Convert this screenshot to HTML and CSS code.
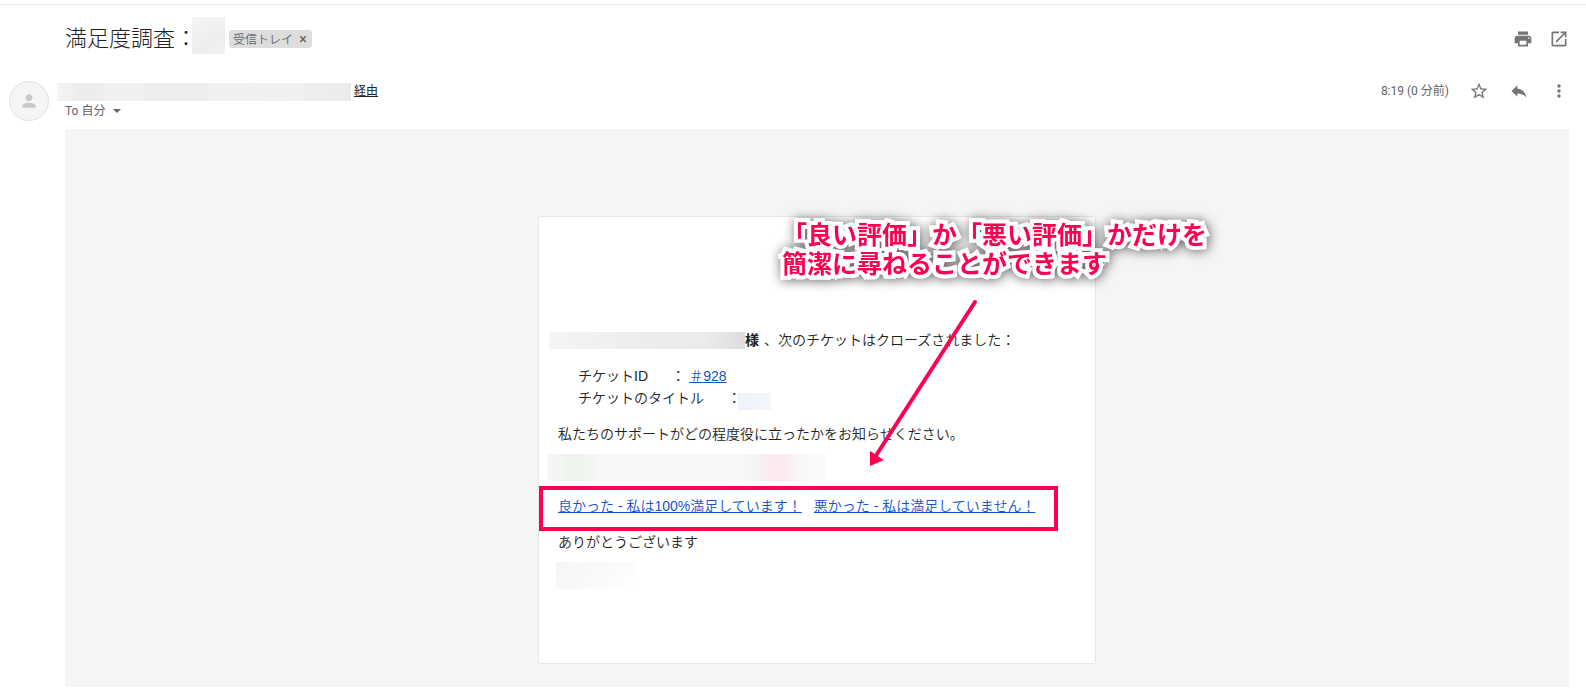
FILE: index.html
```html
<!DOCTYPE html>
<html lang="ja">
<head>
  <meta charset="UTF-8">
  <meta name="viewport" content="width=device-width, initial-scale=1.0">
  <title>満足度調査</title>
  <link rel="stylesheet" href="styles.css">
</head>
<body>

  <!-- Subject -->
  <header class="subject-bar">
    <h1>満足度調査：</h1>
    <span class="redacted redacted-subject"></span>
    <div class="label">受信トレイ <button class="label-remove" aria-label="ラベルを削除">×</button></div>
    <div class="actions actions-top">
      <button class="icon-btn" aria-label="印刷">
        <svg viewBox="0 0 24 24"><path d="M19 8H5c-1.66 0-3 1.34-3 3v6h4v4h12v-4h4v-6c0-1.66-1.34-3-3-3zm-3 11H8v-5h8v5zm3-7c-.55 0-1-.45-1-1s.45-1 1-1 1 .45 1 1-.45 1-1 1zm-1-9H6v4h12V3z"/></svg>
      </button>
      <button class="icon-btn" aria-label="新しいウィンドウ">
        <svg viewBox="0 0 24 24"><path d="M19 19H5V5h7V3H5c-1.11 0-2 .9-2 2v14c0 1.1.89 2 2 2h14c1.1 0 2-.9 2-2v-7h-2v7zM14 3v2h3.59l-9.83 9.83 1.41 1.41L19 6.41V10h2V3h-7z"/></svg>
      </button>
    </div>
  </header>

  <!-- Sender -->
  <section class="sender-bar">
    <div class="avatar">
      <svg viewBox="0 0 24 24"><path d="M12 12c2.21 0 4-1.79 4-4s-1.79-4-4-4-4 1.79-4 4 1.79 4 4 4zm0 2c-2.67 0-8 1.34-8 4v2h16v-2c0-2.66-5.33-4-8-4z"/></svg>
    </div>
    <div class="sender">
      <div class="sender-name">
        <span class="redacted redacted-sender"></span>
        <a href="#">経由</a>
      </div>
      <button class="recipient">To 自分 <span class="caret"></span></button>
    </div>
    <span class="date">8:19 (0 分前)</span>
    <div class="actions">
      <button class="icon-btn" aria-label="スター">
        <svg viewBox="0 0 24 24"><path d="M22 9.24l-7.19-.62L12 2 9.19 8.63 2 9.24l5.46 4.73L5.82 21 12 17.27 18.18 21l-1.63-7.03L22 9.24zM12 15.4l-3.76 2.27 1-4.28-3.32-2.88 4.38-.38L12 6.1l1.71 4.04 4.38.38-3.32 2.88 1 4.28L12 15.4z"/></svg>
      </button>
      <button class="icon-btn" aria-label="返信">
        <svg viewBox="0 0 24 24"><path d="M10 9V5l-7 7 7 7v-4.1c5 0 8.5 1.6 11 5.1-1-5-4-10-11-11z"/></svg>
      </button>
      <button class="icon-btn" aria-label="その他">
        <svg viewBox="0 0 24 24"><path d="M12 8c1.100 0 2-.9 2-2s-.9-2-2-2-2 .9-2 2 .9 2 2 2zm0 2c-1.100 0-2 .9-2 2s.9 2 2 2 2-.9 2-2-.9-2-2-2zm0 6c-1.100 0-2 .9-2 2s.9 2 2 2 2-.9 2-2-.9-2-2-2z"/></svg>
      </button>
    </div>
  </section>

  <!-- Message -->
  <main class="message">
    <article class="card">
      <p class="greeting"><span class="redacted redacted-name"></span><b>様</b> 、次のチケットはクローズされました：</p>

      <div class="ticket">
        <p>チケットID      ： <a href="#">＃928</a></p>
        <p>チケットのタイトル      ：<span class="redacted redacted-title"></span></p>
      </div>

      <p class="text">私たちのサポートがどの程度役に立ったかをお知らせください。</p>
      <div class="redacted redacted-faces"></div>

      <div class="rating">
        <a href="#">良かった - 私は100%満足しています！</a>
        <a href="#">悪かった - 私は満足していません！</a>
      </div>

      <p class="text">ありがとうございます</p>
      <div class="redacted redacted-sign"></div>

      <!-- Callout -->
      <p class="callout">「良い評価」か「悪い評価」かだけを<br>簡潔に尋ねることができます</p>
      <svg class="arrow" viewBox="0 0 120 176">
        <path class="arrow-line" d="M110 8 12 160"/>
        <path class="arrow-head" d="M5 172V157L10 160L14 163L19 166Z"/>
      </svg>
    </article>
  </main>

</body>
</html>
```
FILE: styles.css
```css
/* Global Styles */
* {
  margin: 0;
  padding: 0;
  box-sizing: border-box;
}

body {
  display: flex;
  flex-direction: column;
  min-height: 100vh;
  padding: 4px 0 2px;
  font-family: Roboto, 'Noto Sans CJK JP', sans-serif;
  background: #fff;
  color: #202124;
}

button {
  border: none;
  background: none;
  font: inherit;
  color: inherit;
  cursor: pointer;
}

/* Subject */
.subject-bar {
  display: flex;
  align-items: center;
  height: 68px;
  padding: 0 17px 0 65px;
  border-top: 1px solid #e5e9ed;
}

.subject-bar h1 {
  width: 127px;
  padding-bottom: 6px;
  font-size: 22px;
  font-weight: 300;
  white-space: nowrap;
}

.label {
  display: flex;
  align-items: center;
  gap: 5px;
  height: 18px;
  margin-left: 4px;
  padding: 0 4px;
  border-radius: 3px;
  background: #ddd;
  color: #666;
  font-size: 12px;
  font-weight: 350;
}

.label-remove {
  width: 10px;
  font-size: 14px;
  font-weight: 500;
  line-height: 16px;
}

.actions {
  display: flex;
  gap: 20px;
}

.actions-top {
  gap: 16px;
  margin-left: auto;
}

.icon-btn {
  width: 20px;
  height: 20px;
}

.icon-btn svg {
  display: block;
  fill: #757575;
}

/* Sender */
.sender-bar {
  display: flex;
  align-items: flex-start;
  height: 57px;
  padding: 9px 17px 0 9px;
}

.avatar {
  width: 40px;
  height: 40px;
  padding: 9px;
  border: 1px solid #e2e2e2;
  border-radius: 50%;
  background: #f5f5f5;
}

.avatar svg {
  display: block;
  fill: #c8c8c8;
}

.sender {
  padding-top: 2px;
  margin-left: 8px;
  font-size: 12px;
  line-height: 18px;
}

.sender-name {
  display: flex;
  gap: 3px;
}

.sender-name a {
  color: #222;
  line-height: 16px;
}

.recipient {
  display: flex;
  align-items: center;
  gap: 8px;
  padding: 1px 0 0 8px;
  color: #5f6368;
}

.caret {
  border: 4px solid transparent;
  border-top-color: #666;
  border-bottom: none;
}

.date {
  margin: 0 20px 0 auto;
  color: #5f6368;
  font-size: 12px;
  line-height: 20px;
}

/* Blurred parts */
.redacted {
  display: block;
  flex: none;
}

.redacted-subject {
  width: 33px;
  height: 37px;
  margin-bottom: 6px;
  background: linear-gradient(150deg, #f6f6f6, #eee 60%, #f1f1f1);
}

.redacted-sender {
  width: 294px;
  height: 18px;
  background: linear-gradient(90deg, #f5f5f5, #ebebeb 10%, #f0f0f0 18%, #eee 40%, #f1f1f1 75%, #ebebeb);
}

.redacted-name {
  width: 196px;
  height: 17px;
  background: linear-gradient(90deg, #f5f5f5, #ececec 50%, #ebebeb 80%, #ddd);
}

.redacted-title {
  width: 33px;
  height: 17px;
  margin: 6px 0 0 -3px;
  background: linear-gradient(90deg, #eff2f9, #f4f6fb);
}

.redacted-faces {
  width: 279px;
  height: 27px;
  margin: 9px 0 5px 8px;
  background: linear-gradient(90deg, #f7f7f7, #edf3ed 10%, #f6f7f6 18%, #f8f8f9 70%, #f6f3f4 75%, #fbe8ec 83%, #f8f7f8 91%, #fcfcfc);
}

.redacted-sign {
  width: 79px;
  height: 27px;
  margin: 9px 0 0 17px;
  background: linear-gradient(135deg, #f6f6f6, #fafafa 60%, #fff);
}

/* Message */
.message {
  flex: 1;
  margin: 0 17px 0 65px;
  padding: 87px 16px 16px;
  background: #f5f5f5;
}

.card {
  position: relative;
  max-width: 558px;
  min-height: 448px;
  margin: 0 auto;
  padding-top: 112px;
  border: 1px solid #e6e6e6;
  border-radius: 3px;
  background: #fff;
  color: #222;
  font-family: 'Liberation Sans', 'Noto Sans CJK JP', sans-serif;
  font-size: 14px;
  font-weight: 350;
  line-height: 22px;
}

.card a {
  color: #15c;
}

.greeting {
  display: flex;
  align-items: center;
  padding-left: 10px;
}

.greeting b {
  margin-right: 5px;
}

.ticket {
  margin: 14px 0;
  padding-left: 39px;
}

.ticket p {
  display: flex;
  align-items: center;
  height: 22px;
  white-space: pre;
}

.text {
  padding-left: 19px;
}

.rating {
  display: flex;
  gap: 12px;
  width: 519px;
  height: 45px;
  padding: 5px 15px;
  border: 4px solid #ff0050;
}

/* Callout */
.callout {
  position: absolute;
  top: 4px;
  left: 243px;
  color: #ff0050;
  font-size: 25px;
  font-weight: 700;
  line-height: 29px;
  white-space: nowrap;
  -webkit-text-stroke: 8px #fff;
  paint-order: stroke fill;
  stroke-linejoin: round;
  filter: drop-shadow(1px 1px 6px rgba(0, 0, 0, 0.6));
}

.arrow {
  position: absolute;
  top: 77px;
  left: 326px;
  width: 120px;
  height: 176px;
}

.arrow-line {
  fill: none;
  stroke: #ff0050;
  stroke-width: 4;
  stroke-linecap: round;
}

.arrow-head {
  fill: #ff0050;
}
```
